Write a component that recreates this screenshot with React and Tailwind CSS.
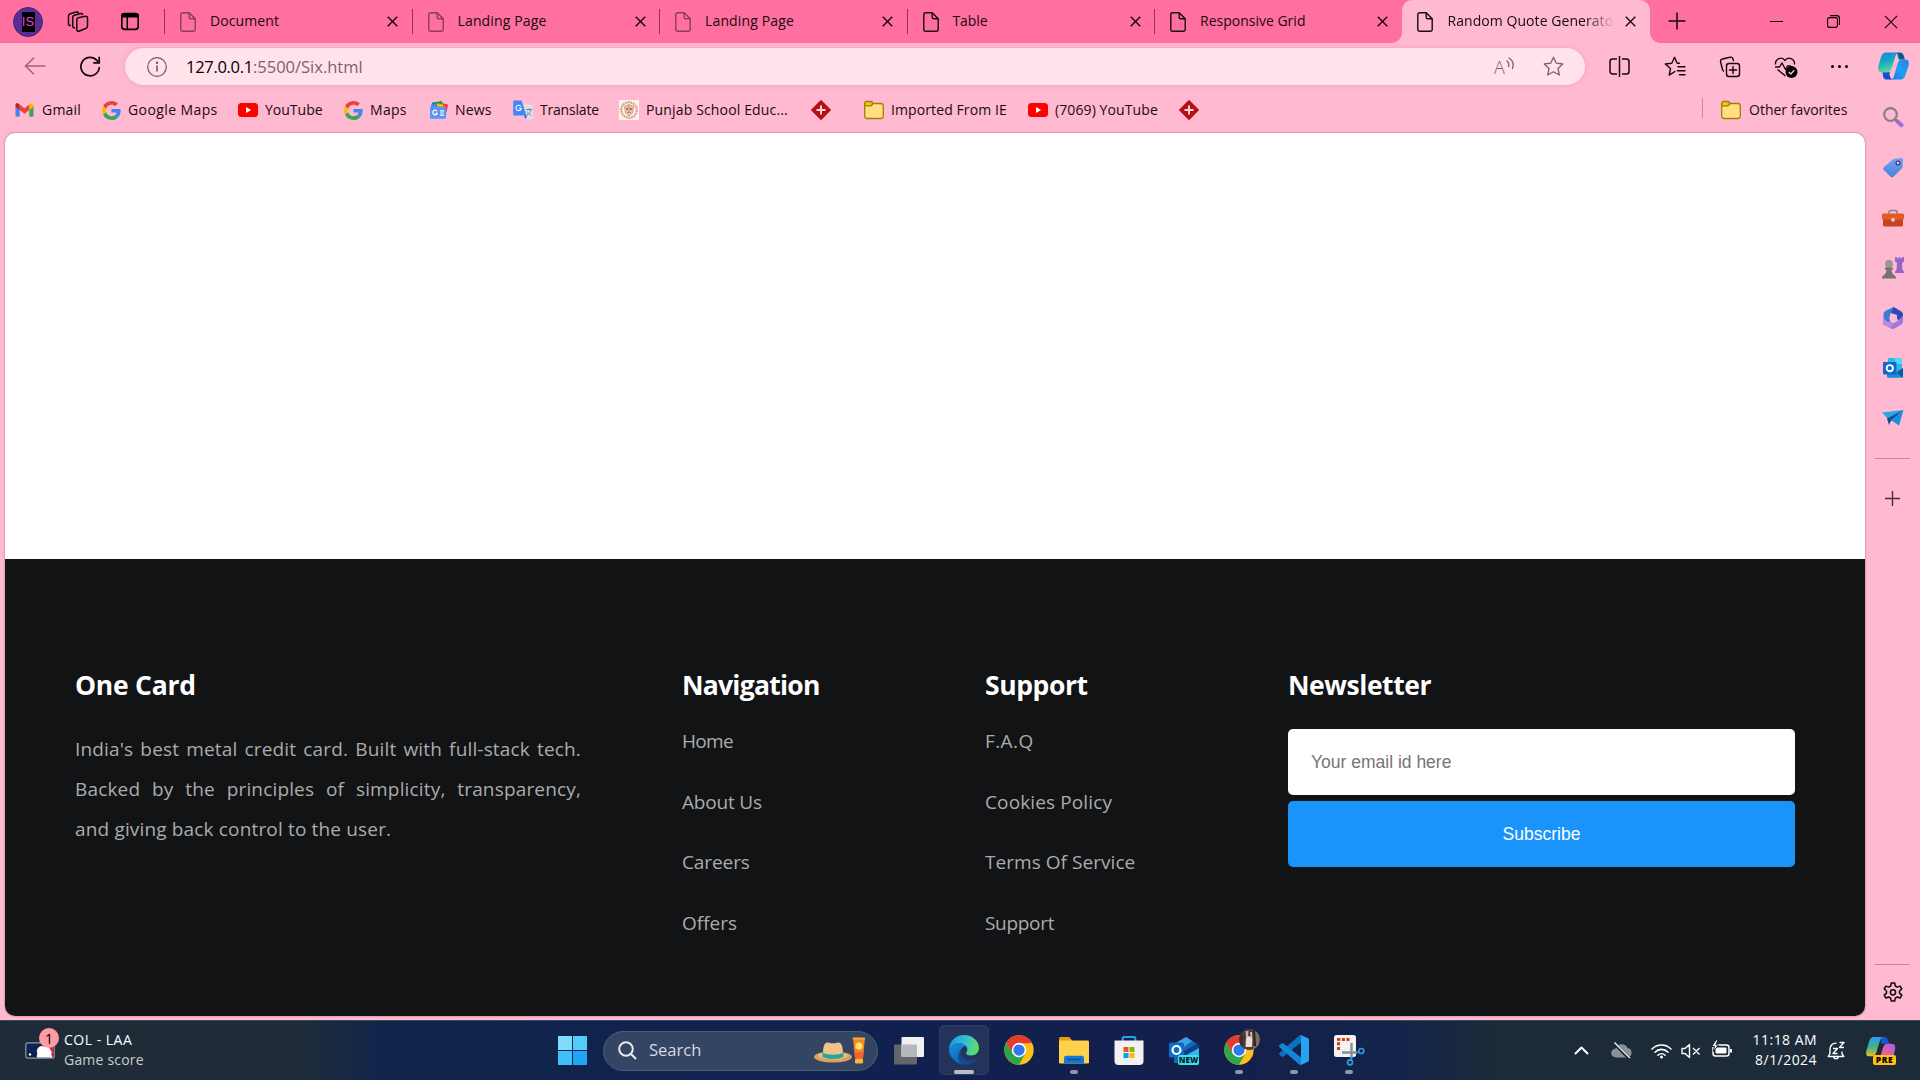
import React from "react";

const DocIcon = ({ dim }) => (
  <svg className={dim ? "h-5 w-4 shrink-0 opacity-50" : "h-5 w-4 shrink-0"} viewBox="0 0 16 20" fill="none" stroke="#1a0a10" strokeWidth="1.4" strokeLinejoin="round">
    <path d="M2.6 .8h6.6l6 6v10.6a1.8 1.8 0 0 1-1.8 1.8H2.6A1.8 1.8 0 0 1 .8 17.400V2.600A1.8 1.800 0 0 1 2.600 .8z" />
    <path d="M9.200 .8v4.400a1.600 1.600 0 0 0 1.600 1.600h4.400" />
  </svg>
);

const Cross = ({ className, w = 1.5 }) => (
  <svg className={className} viewBox="0 0 12 12" stroke="#14060b" strokeWidth={w} fill="none">
    <path d="M.8 .8l10.400 10.400M11.200 .8L.8 11.200" />
  </svg>
);

const GoogleG = () => (
  <svg className="h-[19px] w-[19px] shrink-0" viewBox="0 0 48 48">
    <path fill="#EA4335" d="M24 9.500c3.540 0 6.710 1.220 9.210 3.600l6.850-6.850C35.900 2.380 30.470 0 24 0 14.620 0 6.510 5.380 2.560 13.220l7.980 6.190C12.430 13.720 17.740 9.500 24 9.500z" />
    <path fill="#4285F4" d="M46.980 24.550c0-1.570-.15-3.090-.38-4.550H24v9.020h12.940c-.58 2.960-2.260 5.480-4.780 7.180l7.730 6c4.510-4.180 7.090-10.360 7.090-17.650z" />
    <path fill="#FBBC05" d="M10.530 28.590c-.48-1.450-.76-2.990-.76-4.590s.27-3.140.76-4.590l-7.980-6.190C.92 16.460 0 20.120 0 24c0 3.880.92 7.540 2.560 10.780l7.970-6.190z" />
    <path fill="#34A853" d="M24 48c6.480 0 11.930-2.130 15.890-5.810l-7.730-6c-2.150 1.450-4.920 2.300-8.160 2.300-6.260 0-11.570-4.220-13.470-9.910l-7.980 6.190C6.510 42.620 14.620 48 24 48z" />
  </svg>
);

const YouTube = () => (
  <svg className="h-5 w-5 shrink-0" viewBox="0 0 20 20">
    <rect x="0" y="3" width="20" height="14" rx="3.500" fill="#f00" />
    <path d="M8 7l5.200 3L8 13z" fill="#fff" />
  </svg>
);

const Gmail = () => (
  <svg className="h-5 w-[19px] shrink-0" viewBox="0 0 19 20">
    <path d="M.5 5.500V15.500a1.300 1.300 0 0 0 1.300 1.300h2.900V8.500z" fill="#4285F4" />
    <path d="M18.500 5.500V15.500a1.300 1.300 0 0 1-1.300 1.300h-2.900V8.500z" fill="#34A853" />
    <path d="M14.300 4.500l1.600-1.100c1.200-.8 2.600 0 2.600 1.500v1.900l-4.200 3.200z" fill="#FBBC04" />
    <path d="M4.700 10V4.500l4.800 3.700 4.800-3.700V10l-4.800 3.700z" fill="#EA4335" />
    <path d="M.5 6.800V4.900c0-1.500 1.400-2.300 2.600-1.500l1.600 1.100V10z" fill="#C5221F" />
  </svg>
);

const News = () => (
  <svg className="h-5 w-[19px] shrink-0" viewBox="0 0 19 20">
    <path d="M3 2.500l10-1.500 1 5H3z" fill="#0F9D58" />
    <path d="M2 4.500l6-1 1 4H2z" fill="#4285F4" />
    <path d="M8 3.500l10 1-1 12H8z" fill="#F4B400" />
    <path d="M13 3l6 1.500-1.500 8z" fill="#EA4335" />
    <rect x="1" y="6.800" width="16" height="12" rx="1.300" fill="#5a94f5" />
    <path d="M8 11.200a2.300 2.300 0 1 0 .2 2.200H6.500M15 10.800h-3.800M11.200 13h3.400M15 15.200h-3.800" stroke="#fff" strokeWidth="1.200" fill="none" />
  </svg>
);

const Translate = () => (
  <svg className="h-5 w-5 shrink-0" viewBox="0 0 20 20">
    <path d="M7.500 4.500h11.300a1 1 0 0 1 1 1v12.800a1 1 0 0 1-1 1h-6.300z" fill="#dcdfe3" />
    <path d="M13 9.500h6M16 8.200v1.300M17.800 9.800c-.6 2.500-2 4-4 5.200M14 11.500c.8 1.800 2.200 3 4.200 3.800" stroke="#6f8794" strokeWidth="1" fill="none" />
    <path d="M12.500 19.300l-1.500-3.800h3.500z" fill="#3367d6" />
    <path d="M1.200 .5h7.300L13.500 15.500H1.200a1 1 0 0 1-1-1v-13a1 1 0 0 1 1-1z" fill="#4285F4" />
    <path d="M7.800 6.300A2.700 2.700 0 1 0 8.300 8.300H5.800" stroke="#fff" strokeWidth="1.100" fill="none" />
  </svg>
);

const Crest = () => (
  <svg className="h-5 w-5 shrink-0" viewBox="0 0 20 20">
    <rect width="20" height="20" fill="#fdf3ec" />
    <circle cx="10" cy="10" r="7.800" fill="none" stroke="#d5a286" strokeWidth="2.200" strokeDasharray="2 .7" />
    <path d="M5.500 6.500l4.500-2 4.500 2-1 6.500-3.500 3-3.500-3z" fill="#e9c6b0" stroke="#c58a6c" strokeWidth=".8" />
    <circle cx="8" cy="9" r="1" fill="#a25f3e" />
    <circle cx="12" cy="9" r="1" fill="#a25f3e" />
    <path d="M8 12.500h4M10 6v6" stroke="#b0714f" strokeWidth=".8" />
  </svg>
);

const Diamond = () => (
  <svg className="h-5 w-5 shrink-0" viewBox="0 0 20 20">
    <path d="M10 .8L19.200 10 10 19.200 .8 10z" fill="#b80f16" stroke="#b80f16" strokeWidth="1.400" strokeLinejoin="round" />
    <path d="M10 5.500v9M5.500 10h9" stroke="#ffd3d8" strokeWidth="2" />
  </svg>
);

const Folder = () => (
  <svg className="h-5 w-5 shrink-0" viewBox="0 0 20 20" stroke="#a87c00" strokeWidth="1.300">
    <path d="M3 3.500h14a2.300 2.300 0 0 1 2.300 2.300v10.400a2.300 2.300 0 0 1-2.300 2.300H3A2.300 2.300 0 0 1 .7 16.200V4z" fill="#ffdf82" />
    <path d="M.7 5.800V3.300A1.800 1.800 0 0 1 2.500 1.500h4.200a1.800 1.800 0 0 1 1.800 1.800c0 1.300-.9 2.500-2.300 2.500z" fill="#f5c31c" />
  </svg>
);

const BOOKMARKS = [
  { icon: <Gmail />, label: "Gmail", box: "w-[87px]", gap: "ml-[8px] tracking-[0.2px]" },
  { icon: <GoogleG />, label: "Google Maps", box: "w-[136px]", gap: "ml-[7px] tracking-[0.4px]" },
  { icon: <YouTube />, label: "YouTube", box: "w-[106px]", gap: "ml-[7px]" },
  { icon: <GoogleG />, label: "Maps", box: "w-[85px]", gap: "ml-[7px] tracking-[0.3px]" },
  { icon: <News />, label: "News", box: "w-[84px]", gap: "ml-[7px] tracking-[0.2px]" },
  { icon: <Translate />, label: "Translate", box: "w-[106px]", gap: "ml-[7px] -tracking-[0.2px]" },
  { icon: <Crest />, label: "Punjab School Educ...", box: "w-[192px]", gap: "ml-[7px] tracking-[0.15px]" },
  { icon: <Diamond />, label: "", box: "w-[53px]", gap: "" },
  { icon: <Folder />, label: "Imported From IE", box: "w-[164px]", gap: "ml-[7px] tracking-[0.1px]" },
  { icon: <YouTube />, label: "(7069) YouTube", box: "w-[151px]", gap: "ml-[7px] tracking-[0.1px]" },
  { icon: <Diamond />, label: "", box: "w-[40px]", gap: "" },
];

const TABS = [
  { label: "Document", dim: true, tr: "tracking-[0.1px]" },
  { label: "Landing Page", dim: true, tr: "tracking-[0.15px]" },
  { label: "Landing Page", dim: true, tr: "tracking-[0.15px]" },
  { label: "Table", dim: false, tr: "-tracking-[0.1px]" },
  { label: "Responsive Grid", dim: false, tr: "tracking-[0px]" },
];

function TabStrip() {
  return (
    <header className="flex h-[43px] bg-[#ff6fa0]">
      <div className="flex w-[164px] shrink-0 items-center pl-[13px]">
        <div className="flex h-[30px] w-[30px] items-center justify-center rounded-full border border-[#3a2a6a] bg-[#5a2c94]">
          <div className="flex h-[20px] w-[13px] items-center justify-center bg-black">
            <span className="font-['Liberation_Sans'] text-[13px] leading-none text-[#d94ad0]">IS</span>
          </div>
        </div>
        <svg className="ml-[23px] h-[22px] w-[23px]" viewBox="0 0 23 22" fill="none" stroke="#1a0a10" strokeWidth="1.500" strokeLinecap="round" strokeLinejoin="round">
          <path d="M12.200 6.800l7.200-1.500a1.700 1.700 0 0 1 2.100 1.700v8.300a2 2 0 0 1-1.300 1.900l-7.300 3a1.500 1.500 0 0 1-2.100-1.400V9a2.200 2.200 0 0 1 1.400-2.200z" />
          <path d="M8.500 16.800a1.600 1.600 0 0 1-1.800-1.600V6.500A2.300 2.300 0 0 1 8.400 4.200l6.200-1.700a1.700 1.700 0 0 1 2 .9" />
          <path d="M4.300 14.500A1.600 1.600 0 0 1 2.500 12.900V5a2.300 2.300 0 0 1 1.700-2.300L10.300 1a1.700 1.700 0 0 1 2 .7" />
        </svg>
        <svg className="ml-[31px] h-[19px] w-[20px]" viewBox="0 0 20 19">
          <rect x="1.800" y="1.600" width="16.400" height="15.800" rx="2.800" fill="none" stroke="#000" strokeWidth="1.600" />
          <path d="M1 5.600V4a3 3 0 0 1 3-3h12a3 3 0 0 1 3 3v1.600z" />
          <path d="M7.300 5v12" stroke="#000" strokeWidth="1.500" />
        </svg>
      </div>
      {TABS.map((tab, i) => (
        <div key={i} className="flex w-[247.5px] shrink-0 items-center">
          <div className="h-[25px] w-px shrink-0 bg-[#8c3555]" />
          <div className="ml-[15px] flex"><DocIcon dim={tab.dim} /></div>
          <span className={"-mt-px ml-[14px] whitespace-nowrap text-[14px] leading-5 text-[#1a0a10] " + tab.tr}>{tab.label}</span>
          <Cross className="ml-auto mr-[13.500px] h-[11px] w-[11px]" />
        </div>
      ))}
      <div className="relative flex w-[248px] shrink-0 items-center rounded-t-[10px] bg-[#ffb9d0] pl-[15px]">
        <span className="absolute -left-[10px] bottom-0 h-[10px] w-[10px] bg-[radial-gradient(circle_at_0_0,transparent_9.500px,#ffb9d0_10px)]" />
        <span className="absolute -right-[10px] bottom-0 h-[10px] w-[10px] bg-[radial-gradient(circle_at_100%_0,transparent_9.500px,#ffb9d0_10px)]" />
        <DocIcon />
        <div className="-mt-px ml-[15px] w-[167px] overflow-hidden whitespace-nowrap text-[14px] leading-5 tracking-[0.060px] text-[#1a0a10] [mask-image:linear-gradient(to_right,black_82%,transparent_100%)]">Random Quote Generator</div>
        <Cross className="ml-[10px] h-[11px] w-[11px]" />
      </div>
      <svg className="ml-[18px] mt-[12px] h-[18px] w-[18px]" viewBox="0 0 18 18" stroke="#14060b" strokeWidth="1.500">
        <path d="M9 .5v17M.5 9h17" />
      </svg>
      <div className="ml-auto flex items-center pr-[22px]">
        <div className="h-px w-[13px] bg-black" />
        <svg className="ml-[44px] h-[13px] w-[13px]" viewBox="0 0 13 13" fill="none" stroke="#000" strokeWidth="1.100">
          <rect x=".6" y="2.600" width="9.800" height="9.800" rx="1.600" />
          <path d="M3 .6h6.800a2.600 2.600 0 0 1 2.600 2.600V10" />
        </svg>
        <Cross w={1} className="ml-[44px] h-[14px] w-[14px]" />
      </div>
    </header>
  );
}

function CopilotTop() {
  return (
    <svg className="h-[28px] w-[31px]" viewBox="0 0 31 28">
      <defs>
        <linearGradient id="cpa" x1="0" y1="0" x2="0.300" y2="1"><stop offset="0" stopColor="#1683d8" /><stop offset=".5" stopColor="#14a8c4" /><stop offset="1" stopColor="#5ed69a" /></linearGradient>
        <linearGradient id="cpb" x1="1" y1="0" x2="0" y2="1"><stop offset="0" stopColor="#2f7be0" /><stop offset=".5" stopColor="#1ba3f5" /><stop offset="1" stopColor="#1478e8" /></linearGradient>
      </defs>
      <path d="M7.500 27.500c-2.500-1-2.600-3.500-2.800-7.500h7c-.5 3 .5 7.500 4 7.500z" fill="#0f4fd0" />
      <path d="M19 .5h3c3 0 4 3 4.800 7h-6z" fill="#0e5a8c" />
      <path d="M8.500 .5H21c-2 0-3.200 2-4 5l-3 10c-1 3.500-2.500 5-5 5H4c-3.500 0-4.500-3-3.600-6.500l2.500-8.500C4 2 5.500 .5 8.500 .5z" fill="url(#cpa)" />
      <path d="M22 27.500H12.500c2 0 3-1.500 3.800-4.500l3-10.500c.9-3.300 2.300-5 5-5h3c3.500 0 4 3 3.200 6.200L28 21.500c-1.100 4-2.500 6-6 6z" fill="url(#cpb)" />
    </svg>
  );
}

function Toolbar() {
  return (
    <div className="flex h-[48px] items-start pt-[5px]">
      <svg className="ml-[24px] mt-[9px] h-[18px] w-[22px]" viewBox="0 0 22 18" fill="none" stroke="#a0637a" strokeWidth="1.500">
        <path d="M21.500 9H1.500M10 .8L1.500 9l8.500 8.200" />
      </svg>
      <svg className="ml-[33px] mt-[8px] h-[21px] w-[22px]" viewBox="0 0 22 21" fill="none" stroke="#14060b" strokeWidth="1.700">
        <path d="M20.300 11A9.200 9.200 0 1 1 17.800 4.300L20 6.500" />
        <path d="M20.200 .8v6h-6" />
      </svg>
      <div className="ml-[24px] flex h-[37px] w-[1460px] items-center rounded-full bg-[#ffe2ea] pl-[22px] shadow-[0_0_5px_rgba(190,90,125,0.250)]">
        <svg className="h-[20px] w-[20px]" viewBox="0 0 20 20" fill="none" stroke="#6e5a62" strokeWidth="1.200">
          <circle cx="10" cy="10" r="9.300" />
          <path d="M10 8.500v6" strokeWidth="1.600" />
          <circle cx="10" cy="5.800" r=".6" fill="#6e5a62" />
        </svg>
        <span className="ml-[19px] whitespace-nowrap text-[16.500px] leading-6 text-[#77656c]"><span className="-tracking-[0.3px] text-black">127.0.0.1</span>:5500/Six.html</span>
        <div className="ml-auto flex w-[91px] items-center">
          <div className="flex w-[20px] items-start text-[#75646b]">
            <span className="w-[12px] text-[18px] font-light leading-[20px]">A</span>
            <svg className="h-[13px] w-[8px] shrink-0" viewBox="0 0 8 13" fill="none" stroke="#75646b" strokeWidth="1.300">
              <path d="M.5 3.500c2 1.200 2.800 3.500 2 6.500M2.500 .8C6.800 3.200 8 7.500 6.300 12" />
            </svg>
          </div>
          <svg className="ml-[29px] h-[21px] w-[21px]" viewBox="0 0 21 21" fill="none" stroke="#75646b" strokeWidth="1.300" strokeLinejoin="round">
            <path d="M10.500 1.200l2.800 6 6.500.8-4.800 4.500 1.300 6.500-5.800-3.300-5.800 3.300L6 12.500 1.200 8l6.500-.8z" />
          </svg>
        </div>
      </div>
      <svg className="ml-[24px] mt-[7px] h-[23px] w-[21px]" viewBox="0 0 21 23" fill="none" stroke="#14060b" strokeWidth="1.500">
        <path d="M8 4H3.500A2.500 2.500 0 0 0 1 6.500v10A2.500 2.500 0 0 0 3.500 19H8M10.500 1v21M13 4h4.500A2.500 2.500 0 0 1 20 6.500v10a2.500 2.500 0 0 1-2.500 2.500H13" />
      </svg>
      <svg className="ml-[34px] mt-[8px] h-[21px] w-[22px]" viewBox="0 0 22 21" fill="none" stroke="#14060b" strokeWidth="1.400" strokeLinejoin="round" strokeLinecap="round">
        <path d="M11 15.500l-5.800 3.700 1.300-6.700L1.300 8l6.500-.8L10.500 1.300l2.700 5.900H15.500M14 10.800h7M13.500 14.800h7.500M15.500 18.800H21" />
      </svg>
      <svg className="ml-[33px] mt-[8px] h-[22px] w-[22px]" viewBox="0 0 22 22" fill="none" stroke="#14060b" strokeWidth="1.400" strokeLinecap="round">
        <rect x="7.500" y="7.500" width="13" height="13" rx="2.500" />
        <path d="M14 10.500v7M10.500 14h7M4.500 15A2.500 2.500 0 0 1 3.400 13L1.600 6A2.500 2.500 0 0 1 3.400 3L11 1.200A2.500 2.500 0 0 1 14 3l.4 1.500" />
      </svg>
      <svg className="ml-[33px] mt-[8px] h-[23px] w-[24px]" viewBox="0 0 24 23" fill="none" stroke="#14060b" strokeWidth="1.400" strokeLinejoin="round">
        <path d="M1.500 8.500c-.5-6 6.500-8.500 9.500-4 3-4.500 10-2 9.500 4M1 11h4.500L8 7l3.500 6.500 2-3.500H17M3.500 13.500l8 6.500" />
        <circle cx="17.500" cy="16" r="6" fill="#000" stroke="none" />
        <path d="M14.800 16l2 2 3.500-3.800" stroke="#ffb9d0" />
      </svg>
      <div className="ml-[33px] mt-[17px] flex gap-[4px]">
        <i className="h-[3px] w-[3px] rounded-full bg-black" />
        <i className="h-[3px] w-[3px] rounded-full bg-black" />
        <i className="h-[3px] w-[3px] rounded-full bg-black" />
      </div>
      <div className="ml-[30px] mt-[4px]"><CopilotTop /></div>
    </div>
  );
}

function Bookmarks() {
  return (
    <nav className="flex h-[42px] items-center pb-[4px] pl-[15px]">
      {BOOKMARKS.map((b, i) => (
        <div key={i} className={"flex shrink-0 items-center " + b.box}>
          {b.icon}
          {b.label && <span className={"whitespace-nowrap text-[14px] leading-5 text-[#1a0a10] " + b.gap}>{b.label}</span>}
        </div>
      ))}
      <div className="ml-auto flex w-[218px] items-center">
        <div className="-mt-[4px] h-5 w-px bg-[#c98a9f]" />
        <div className="ml-[18px] flex"><Folder /></div>
        <span className="ml-[8px] whitespace-nowrap text-[14px] leading-5 text-[#1a0a10]">Other favorites</span>
      </div>
    </nav>
  );
}

const SIDE_ICONS = [
  <svg key="s" className="-mt-px mb-px h-[22px] w-[22px]" viewBox="0 0 22 22" fill="none">
    <circle cx="8.500" cy="8.500" r="6.300" stroke="#858085" strokeWidth="2.200" />
    <path d="M15 15l4.500 4.200" stroke="#9a6fd8" strokeWidth="4" strokeLinecap="round" />
    <path d="M13 13l2 2" stroke="#858085" strokeWidth="2.200" />
  </svg>,
  <svg key="t" className="h-[22px] w-[22px]" viewBox="0 0 22 22">
    <defs><linearGradient id="tg" x1="0" y1="0" x2="0" y2="1"><stop offset="0" stopColor="#6fa3f2" /><stop offset="1" stopColor="#4b7fdc" /></linearGradient></defs>
    <path d="M12.500 1.800L19 1a1.700 1.700 0 0 1 2 2l-.4 7a2 2 0 0 1-.6 1.300l-8.500 8.500a2 2 0 0 1-2.800 0l-7-6.800a2 2 0 0 1 0-2.800l9.400-8a2 2 0 0 1 1.400-.4z" fill="url(#tg)" />
    <circle cx="16" cy="6" r="1.900" fill="#e8c9f4" stroke="#3c3a86" strokeWidth="1.300" />
  </svg>,
  <svg key="b" className="h-[22px] w-[22px]" viewBox="0 0 22 22">
    <path d="M7 7V5.200a1.700 1.700 0 0 1 1.700-1.700h4.600A1.700 1.700 0 0 1 15 5.200V7" fill="none" stroke="#8a8286" strokeWidth="1.600" />
    <rect x="1" y="10" width="20" height="9.500" rx="1.500" fill="#c8441d" />
    <rect y="6.500" width="22" height="6" rx="1.500" fill="#e45a23" />
    <circle cx="11" cy="12.800" r="2" fill="#d8d0cc" />
  </svg>,
  <svg key="c" className="h-[22px] w-[22px]" viewBox="0 0 22 22">
    <path d="M13 0h2v1.500h1.500V0h2v1.500H20V0h2v4.500l-2 1.500.5 7 1.500 1.500V16h-9v-1.500l1.500-1.500L15 6l-2-1.500z" fill="#9366cc" />
    <circle cx="7" cy="7" r="3.900" fill="#9a9497" />
    <path d="M3 10.500h8v1.800L9.500 13c.3 2.500 1 4 2.500 5 1.500.8 2 1.800 2 3.500H0c0-1.700.5-2.700 2-3.500 1.500-1 2.200-2.500 2.500-5L3 12.300z" fill="#77716f" />
  </svg>,
  <svg key="m" className="h-[22px] w-[22px]" viewBox="0 0 22 22">
    <path d="M7 2.200L11.500 0l4 2-7.500 5v8.500L1.500 18V8c0-2.500 1-4.200 5.500-5.800z" fill="#3f7ad8" />
    <path d="M11.500 0L19 4.200c1.500.9 2 2 2 3.800v7l-6-3V8l-6-2z" fill="#3048b8" />
    <path d="M21 8.500v5.500c0 2-.7 3-2.500 4l-6 3.500c-1.300.7-2.300.7-3.500 0L1.300 17l6.700-2.500 3.500 2 6-4z" fill="#9d7ae0" />
    <path d="M1.200 17V8.500c2 5 3.500 6.500 6.800 6.500l3 2-2.500 4.500z" fill="#b58ce6" />
    <circle cx="11" cy="11" r="3.600" fill="#ffb9d0" />
  </svg>,
  <svg key="o" className="h-[22px] w-[22px]" viewBox="0 0 22 22">
    <rect x="6" y="1" width="14" height="13" rx="1" fill="#33b5ee" />
    <path d="M13 1h6a1 1 0 0 1 1 1v5h-7z" fill="#55d5fa" />
    <path d="M5 12l9 3.500L21 11v8.500a1.300 1.300 0 0 1-1.300 1.300H6.300A1.300 1.300 0 0 1 5 19.500z" fill="#1a8bdc" />
    <path d="M14 15.500l7 5V11z" fill="#0b5ca8" />
    <rect x="1" y="5" width="13.500" height="12.500" rx="1.300" fill="#0a6cc8" />
    <circle cx="7.800" cy="11.200" r="3.100" fill="none" stroke="#fff" strokeWidth="1.900" />
  </svg>,
  <svg key="p" className="h-[22px] w-[22px]" viewBox="0 0 22 22">
    <path d="M0 5.500L21.500 3 6 12z" fill="#2aa5e8" />
    <path d="M5 11.500L21.500 3 8.500 14.500 7 18z" fill="#0b4f86" />
    <path d="M9 13L21.500 3 17 18.500z" fill="#1a8fe0" />
  </svg>,
];

function EdgeSidebar() {
  return (
    <aside className="flex w-[55px] shrink-0 flex-col items-center">
      <div className="-mt-[26px] flex flex-col items-center gap-[28px] pl-px">{SIDE_ICONS}</div>
      <div className="mr-px mt-[29px] h-px w-[35px] bg-[#c08a9c]" />
      <svg className="mr-px mt-[32px] h-[15px] w-[15px]" viewBox="0 0 15 15" stroke="#4a2a36" strokeWidth="1.400"><path d="M7.500 0v15M0 7.500h15" /></svg>
      <div className="mr-px mt-auto h-px w-[35px] bg-[#c08a9c]" />
      <svg className="mb-[17px] mt-[17px] h-[21px] w-[22px]" viewBox="0 0 22 21" fill="none" stroke="#14060b" strokeWidth="1.500" strokeLinejoin="round">
        <path d="M9.300 1h3.400l.6 3 1.900 1.100 2.900-1 1.700 2.900-2.300 2v2.100l2.300 2-1.700 2.900-2.900-1-1.900 1.100-.6 3H9.300l-.6-3-1.900-1.100-2.900 1-1.700-2.900 2.300-2V9l-2.300-2 1.700-2.900 2.900 1L8.700 4z" />
        <circle cx="11" cy="10.300" r="2.600" />
      </svg>
    </aside>
  );
}

const LINKS = [
  {
    title: "Navigation",
    tr: "-tracking-[0.75px]",
    items: [["Home", "-tracking-[0.7px]"], ["About Us", "-tracking-[0.2px]"], ["Careers", "-tracking-[0.1px]"], ["Offers", ""]],
  },
  {
    title: "Support",
    tr: "-tracking-[0.4px]",
    items: [["F.A.Q", "tracking-[0.4px]"], ["Cookies Policy", "tracking-[0.12px]"], ["Terms Of Service", "tracking-[0.05px]"], ["Support", "-tracking-[0.3px]"]],
  },
];

function Page() {
  return (
    <main className="ml-[5px] flex h-[883px] w-[1860px] flex-col overflow-hidden rounded-[10px] bg-white shadow-[0_0_2px_rgba(90,20,45,0.600)]">
      <div className="h-[426px] shrink-0" />
      <footer className="flex flex-1 bg-[#121315] pl-[70px] pt-[106px]">
        <section className="w-[607px] shrink-0">
          <h3 className="text-[26.500px] font-bold leading-[40px] -tracking-[0.25px] text-white">One Card</h3>
          <p className="mt-[24px] w-[506px] text-justify text-[19px] font-medium leading-[40px] tracking-[0.160px] text-[#ababab]">
            India&#39;s best metal credit card. Built with full-stack tech. Backed by the principles of simplicity, transparency,{" "}
            <span className="whitespace-nowrap">and giving back control to the user.</span>
          </p>
        </section>
        {LINKS.map((col) => (
          <section key={col.title} className="w-[303px] shrink-0">
            <h3 className={"text-[26.500px] font-bold leading-[40px] text-white " + col.tr}>{col.title}</h3>
            <ul className="mt-[6px]">
              {col.items.map(([label, tr]) => (
                <li key={label} className={"h-[60.600px] text-[19px] font-medium leading-[60px] text-[#ababab] " + tr}>{label}</li>
              ))}
            </ul>
          </section>
        ))}
        <section className="w-[507px]">
          <h3 className="text-[26.500px] font-bold leading-[40px] -tracking-[0.45px] text-white">Newsletter</h3>
          <div className="mt-[24px] flex h-[66px] items-center rounded-[5px] bg-white pl-[23px] font-['Liberation_Sans'] text-[17.500px] text-[#757575]">Your email id here</div>
          <button className="mt-[6px] flex h-[66px] w-full items-center justify-center rounded-[5px] bg-[#1a94fa] font-['Liberation_Sans'] text-[17.500px] text-white">Subscribe</button>
        </section>
      </footer>
    </main>
  );
}

const Chrome = () => (
  <svg className="h-[30px] w-[30px]" viewBox="0 0 48 48">
    <circle cx="24" cy="24" r="23.500" fill="#fbc116" />
    <path d="M3.600 12.200a23.500 23.500 0 0 0 20.200 35.300l10.200-17.700-19.600 0z" fill="#2da44e" />
    <path d="M3.600 12.200L14.500 30 24 13h20.700A23.500 23.500 0 0 0 3.600 12.200z" fill="#e33b2e" />
    <circle cx="24" cy="24" r="11.500" fill="#fff" />
    <circle cx="24" cy="24" r="9" fill="#2f78ee" />
  </svg>
);

const EdgeLogo = () => (
  <svg className="h-[30px] w-[30px]" viewBox="0 0 30 30">
    <defs>
      <linearGradient id="ea" x1="0" y1=".3" x2="1" y2=".5"><stop offset="0" stopColor="#1b9de2" /><stop offset=".55" stopColor="#35c1d0" /><stop offset="1" stopColor="#5fe05a" /></linearGradient>
      <linearGradient id="eb" x1="0" y1="0" x2=".6" y2="1"><stop offset="0" stopColor="#1a8fe0" /><stop offset="1" stopColor="#0b62b8" /></linearGradient>
    </defs>
    <path d="M0 14C.5 6 7 0 15 0c8.500 0 15 6 15 13 0 4.500-3.500 7.500-8 7.500-3.500 0-5-1.300-5-2.300 0-.8 1.300-1.400 1.300-3.700C18.300 11 14.500 8.500 10.500 8.500 5 8.500 1 11 0 14z" fill="url(#ea)" />
    <path d="M0 14c1-3.800 5.500-6 10-6 3 0 5.500 1.200 6.700 3-3 .5-5.500 3-5.500 7 0 6 5 9.700 10 9.700A15 15 0 0 1 0 14z" fill="url(#eb)" />
    <path d="M12.500 14.500c-1.700 5.500 2 11 8 11 2.500 0 5-.7 7.300-2.200A15 15 0 0 1 14.500 30C9 28 7 19 12.500 14.500z" fill="#124a8f" />
  </svg>
);

const Explorer = () => (
  <svg className="h-[30px] w-[30px]" viewBox="0 0 30 30">
    <path d="M0 3.500A1.500 1.500 0 0 1 1.500 2h8.700l3 3.500V9H0z" fill="#e3a008" />
    <rect y="5.500" width="30" height="23" rx="1.300" fill="#ffd04a" />
    <path d="M5 28.500v-5.500a2.300 2.300 0 0 1 2.300-2.300h15.400a2.300 2.300 0 0 1 2.300 2.300v5.500z" fill="#1678cf" />
    <path d="M9 24.500h12" stroke="#0b4f96" strokeWidth="1.600" strokeLinecap="round" />
  </svg>
);

const Store = () => (
  <svg className="h-[30px] w-[30px]" viewBox="0 0 30 30">
    <path d="M8.700 6.500V3.300a1.300 1.300 0 0 1 1.300-1.300h10a1.300 1.300 0 0 1 1.300 1.300v3.200" fill="none" stroke="#22a7e0" strokeWidth="2" />
    <path d="M.5 5.500h29v20.500a4 4 0 0 1-4 4h-21a4 4 0 0 1-4-4z" fill="#f1f1f3" />
    <path d="M9.500 12h5v5h-5z" fill="#f25022" /><path d="M15.500 12h5v5h-5z" fill="#7fba00" />
    <path d="M9.500 18h5v5h-5z" fill="#00a4ef" /><path d="M15.500 18h5v5h-5z" fill="#ffb900" />
  </svg>
);

const OutlookNew = () => (
  <div className="relative h-[30px] w-[30px]">
    <svg className="h-[30px] w-[30px]" viewBox="0 0 30 30">
      <path d="M5 9L17 2l13 8v14a4 4 0 0 1-4 4H5z" fill="#1565b8" />
      <path d="M5 9L17 2l6 4-15 11z" fill="#3aa2e8" />
      <path d="M12 18L28 8.500l2 1.500v5L16 23z" fill="#0d3f8a" />
      <path d="M14 22l16-9v11a4 4 0 0 1-4 4H14z" fill="#35b5f0" />
      <rect x="0" y="7.500" width="15" height="15" rx="1.500" fill="#0f6cc4" />
      <circle cx="7.500" cy="15" r="4" fill="none" stroke="#fff" strokeWidth="2.200" />
    </svg>
    <span className="absolute left-[9px] top-[20px] h-[10px] w-[21px] rounded-[2px] bg-[#3fe0e8] text-center text-[8px] font-extrabold leading-[10px] text-[#06232e]">NEW</span>
  </div>
);

const VSCode = () => (
  <svg className="h-[30px] w-[30px]" viewBox="0 0 30 30">
    <path d="M22 0v7.500L4.500 21.500c-.6.500-1.400.5-2 0L.5 19.800c-.6-.6-.6-1.500 0-2L20 .7c.6-.5 1.300-.8 2-.7z" fill="#0e6fbe" />
    <path d="M22 30v-7.500L4.500 8.500c-.6-.5-1.400-.5-2 0L.5 10.200c-.6.6-.6 1.500 0 2L20 29.300c.6.500 1.300.8 2 .7z" fill="#1486d8" />
    <path d="M22 0l7 3.300c.6.300 1 1 1 1.700v20c0 .7-.4 1.400-1 1.700L22 30z" fill="#27a3f0" />
  </svg>
);

const Snip = () => (
  <svg className="h-[30px] w-[30px] overflow-visible" viewBox="0 0 30 30">
    <rect x="0" y="0" width="22" height="22" rx="2.500" fill="#f3f3f5" />
    <path d="M15.500 4.500H4.500v12" fill="none" stroke="#d83b01" strokeWidth="3" strokeDasharray="3 1.600" />
    <path d="M17.500 8v15M8 17.500h15" stroke="#8b8f94" strokeWidth="2.400" />
    <circle cx="27.300" cy="16" r="2.500" fill="none" stroke="#2b9be0" strokeWidth="1.700" />
    <circle cx="16" cy="27.300" r="2.500" fill="none" stroke="#2b9be0" strokeWidth="1.700" />
    <path d="M21.500 18l3.500-1M18 21.500l-1 3.500" stroke="#2b9be0" strokeWidth="1.800" />
  </svg>
);

function ChromeProfile() {
  return (
    <div className="relative h-[30px] w-[30px]">
      <Chrome />
      <svg className="absolute -top-[6px] left-[15px] h-[21px] w-[21px]" viewBox="0 0 21 21">
        <clipPath id="av"><circle cx="10.500" cy="10.500" r="10.500" /></clipPath>
        <g clipPath="url(#av)">
          <rect width="21" height="21" fill="#7d6c66" />
          <path d="M0 0h5v21H0z" fill="#3b2e2e" />
          <path d="M4 0h10v21H4z" fill="#4a3c3b" />
          <path d="M6.500 2h3l-.5 6h-2zM11 3h2l.5 5h-2z" fill="#c9b4ab" />
          <path d="M7 9c1.500-2.500 6-2.500 6.500 1l-.5 8H6.500z" fill="#ecdcd4" />
          <path d="M14 1h2l1 16h-2.500z" fill="#2a2022" />
        </g>
      </svg>
    </div>
  );
}

const DOCK = [
  { el: <EdgeLogo />, active: true },
  { el: <Chrome /> },
  { el: <Explorer />, dot: true },
  { el: <Store /> },
  { el: <OutlookNew /> },
  { el: <ChromeProfile />, dot: true },
  { el: <VSCode />, dot: true },
  { el: <Snip />, dot: true },
];

function Taskbar() {
  return (
    <div className="flex h-[60px] items-center border-t border-[#3b4a5c] bg-[linear-gradient(90deg,#1f2c38_0,#1f2c38_300px,#11254b_380px,#10214f_900px,#141f4c_1200px,#13244a_1400px,#1d2a38_1500px,#1d2a38_100%)]">
      <div className="flex w-[558px] shrink-0 items-center pl-[25px]">
        <div className="relative h-[17px] w-[30px]">
          <svg className="h-[17px] w-[30px]" viewBox="0 0 30 17">
            <rect x=".8" y=".8" width="28.400" height="15.400" rx="2" fill="#0d2350" stroke="#8e9aa8" strokeWidth="1.200" />
            <path d="M22 1.500h6.500v14H24z" fill="#d42545" />
            <path d="M12 15.500c-1-2 1-3 0-5-.5-3 1-6 5-6.500l7 1.500 3 5-1 1.500 1.500 3.500z" fill="#fff" />
            <circle cx="5" cy="12.500" r="1.200" fill="#fff" />
          </svg>
          <span className="absolute -top-[14px] left-[14px] flex h-5 w-5 items-center justify-center rounded-full bg-[#ff99a4] text-[14px] text-black">1</span>
        </div>
        <div className="-mt-px ml-[9px] text-[14px] leading-5 text-white">
          <div className="tracking-[0.5px]">COL - LAA</div>
          <div className="tracking-[0.2px] text-[#c8ccd0]">Game score</div>
        </div>
      </div>
      <div className="grid h-[29px] w-[29px] shrink-0 grid-cols-2 gap-px">
        <i className="bg-[#7fdcfb]" /><i className="bg-[#55ccf8]" /><i className="bg-[#3fc0f8]" /><i className="bg-[#1fa5f6]" />
      </div>
      <div className="ml-[16px] flex h-[40px] w-[275px] shrink-0 items-center rounded-full border border-[#4d5b79] bg-[#344463] pl-[14px]">
        <svg className="h-[19px] w-[19px]" viewBox="0 0 19 19" fill="none" stroke="#e8ebf0" strokeWidth="2"><circle cx="8" cy="8" r="6.800" /><path d="M12.800 12.800l5.200 5.200" /></svg>
        <span className="ml-[12px] text-[16.500px] text-[#d4d9e2]">Search</span>
        <svg className="ml-auto mr-[12px] h-[27px] w-[51px]" viewBox="0 0 51 27">
          <ellipse cx="19" cy="20" rx="19" ry="5.500" fill="#d9a25e" />
          <ellipse cx="19" cy="18.500" rx="15" ry="4" fill="#e8bb7c" />
          <path d="M9 18c0-8 1-13 5-12.500 2 .3 3 1 5 .8 2 .2 3-.5 5-.8 4-.3 5 5 5 12.500-5 3-15 3-20 0z" fill="#eec48a" />
          <path d="M8.600 15.500c5 3 16 3 20.800 0V20c-5 2.600-15.800 2.600-20.800 0z" fill="#26a69a" />
          <path d="M39 1h12l-2 20h-8z" fill="#f58a1f" />
          <path d="M38.800 .5h12.400v2H38.800z" fill="#ffa73d" />
          <circle cx="45" cy="9" r="3.500" fill="#ffe07a" />
          <path d="M40.500 15h9l-.6 6.500h-7.800z" fill="#f4622e" />
          <rect x="41" y="21.500" width="8" height="5" rx="1" fill="#ffb638" />
        </svg>
      </div>
      <svg className="ml-[16px] h-[28px] w-[30px] shrink-0" viewBox="0 0 30 28">
        <rect x="0" y="7.500" width="23" height="20" rx="1" fill="#62656a" />
        <rect x="7.500" y="0" width="22.500" height="20" rx="1" fill="#f0f1f3" />
        <rect x="7.500" y="7.500" width="15.500" height="12.500" fill="#b5b8bc" />
      </svg>
      <div className="-mt-px ml-[15px] flex gap-[5px]">
        {DOCK.map((d, i) => (
          <div key={i} className={d.active ? "relative flex h-[50px] w-[50px] items-center justify-center rounded-[5px] border border-[#313e64] bg-[#24335c]" : "relative flex h-[50px] w-[50px] items-center justify-center"}>
            {d.el}
            {d.active && <i className="absolute bottom-0 left-[14px] h-[4px] w-[20px] rounded-full bg-[#bdbdc4]" />}
            {d.dot && <i className="absolute bottom-[1px] left-[21px] h-[4px] w-[8px] rounded-full bg-[#9097ab]" />}
          </div>
        ))}
      </div>
      <div className="ml-auto flex w-[346px] shrink-0 items-center">
        <svg className="h-[9px] w-[15px]" viewBox="0 0 15 9" fill="none" stroke="#fff" strokeWidth="2" strokeLinecap="round" strokeLinejoin="round"><path d="M1.500 7.500l6-6 6 6" /></svg>
        <svg className="ml-[22px] h-[17px] w-[21px]" viewBox="0 0 21 17">
          <path d="M5 15.500a4.500 4.500 0 0 1-.5-9A6.500 6.500 0 0 1 16.500 6a4.800 4.800 0 0 1 0 9.500z" fill="#8a9199" />
          <path d="M3 1l15.500 15.500" stroke="#1d2a38" strokeWidth="3.500" /><path d="M3.500 .5L19 16" stroke="#e8eaec" strokeWidth="1.500" />
        </svg>
        <svg className="ml-[19px] h-[16px] w-[21px]" viewBox="0 0 21 16" fill="none" stroke="#fff" strokeWidth="1.600" strokeLinecap="round">
          <path d="M1 6a13.300 13.300 0 0 1 19 0M4 9.200a9 9 0 0 1 13 0M7 12.200a5 5 0 0 1 7 0" /><circle cx="10.500" cy="14" r="1.500" fill="#fff" stroke="none" />
        </svg>
        <svg className="ml-[9px] h-[16px] w-[20px]" viewBox="0 0 20 16" fill="none" stroke="#fff" strokeWidth="1.400" strokeLinejoin="round">
          <path d="M1 5.500h3L8.500 1.500v13L4 10.500H1zM12 5l6.500 6.500M18.500 5L12 11.500" />
        </svg>
        <svg className="-mt-[3px] ml-[10px] h-[18px] w-[21px]" viewBox="0 0 21 18">
          <rect x="2" y="5" width="16" height="11" rx="2.500" fill="none" stroke="#fff" strokeWidth="1.500" />
          <rect x="4.500" y="7.500" width="11" height="6" rx="1" fill="#fff" /><path d="M19 9h2v3.500h-2z" fill="#fff" />
          <path d="M4.800 0L.8 6.500h2.700L2.200 11.500 7.500 5H4.800L7 0z" fill="#fff" stroke="#1d2a38" strokeWidth="1" />
        </svg>
        <div className="-mt-[2px] ml-auto w-[70px] whitespace-nowrap text-right text-[14px] leading-5 tracking-[0.45px] text-white">
          <div>11:18 AM</div>
          <div>8/1/2024</div>
        </div>
        <svg className="ml-[10px] h-[20px] w-[18px]" viewBox="0 0 18 20" fill="none" stroke="#fff" strokeWidth="1.400" strokeLinejoin="round">
          <path d="M9.500 2.200A5.800 5.800 0 0 0 3 8v4.500L1.200 15.500h15.600L15 12.800V10.500M6.800 16c.5 2.500 4 2.500 4.500 0" />
          <path d="M6 7.500h4.500L6 12.500h4.500M12.500 1.500h4.500L12.500 6.500H17" strokeWidth="1.300" />
        </svg>
        <div className="relative ml-[21px] mr-[24px] h-[29px] w-[30px]">
          <svg className="h-[28px] w-[30px]" viewBox="0 0 31 28">
            <defs>
              <linearGradient id="ca" x1="0" y1="0" x2="0" y2="1"><stop offset="0" stopColor="#2f9df5" /><stop offset=".5" stopColor="#3fae8c" /><stop offset="1" stopColor="#e8c026" /></linearGradient>
              <linearGradient id="cb" x1="1" y1="0" x2="0" y2="1"><stop offset="0" stopColor="#a45cf0" /><stop offset=".5" stopColor="#e85f9c" /><stop offset="1" stopColor="#f5843c" /></linearGradient>
            </defs>
            <path d="M15 .5h4c3 0 4 3 4.800 7h-8z" fill="#1657d0" />
            <path d="M8.500 .5H18c-2 0-3.200 2-4 5l-3 10c-1 3.500-2.500 5-5 5H3C-.5 20.500 0 17 .6 14l2.500-8.500C4 2 5.500 .5 8.500 .5z" fill="url(#ca)" />
            <path d="M22 27.500H10.500c2 0 3-1.500 3.800-4.500l3-10.500c.9-3.300 2.300-5 5-5h4c3.500 0 4.500 3 3.700 6.200L28 21.500c-1.100 4-2.500 6-6 6z" fill="url(#cb)" />
          </svg>
          <span className="absolute left-[7px] top-[19px] h-[10px] w-[23px] rounded-[2px] bg-[#ffc20e] text-center text-[8.500px] font-extrabold leading-[10px] tracking-[0.5px] text-black">PRE</span>
        </div>
      </div>
    </div>
  );
}

export default function App() {
  return (
    <div className="flex h-[1080px] w-[1920px] flex-col overflow-hidden bg-[#ffb9d0] font-['Open_Sans',sans-serif]">
      <TabStrip />
      <Toolbar />
      <Bookmarks />
      <div className="flex h-[887px] shrink-0">
        <Page />
        <EdgeSidebar />
      </div>
      <Taskbar />
    </div>
  );
}
